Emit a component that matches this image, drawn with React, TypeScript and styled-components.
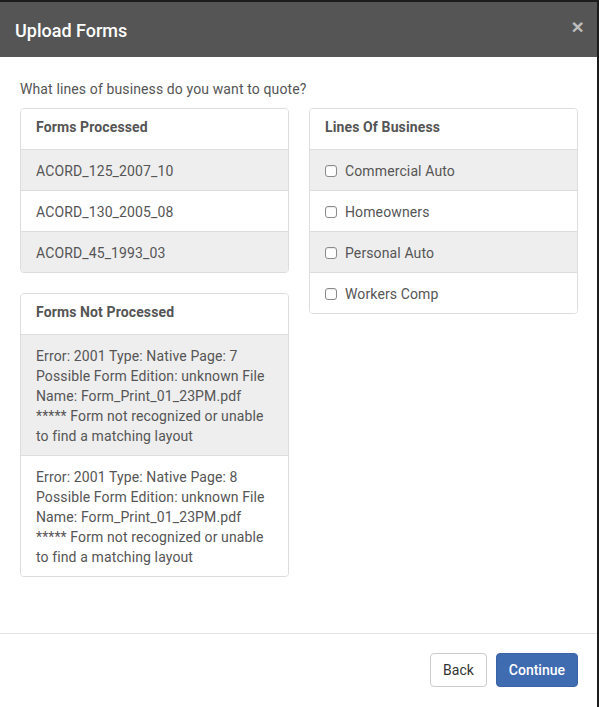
import React from "react";
import styled, { createGlobalStyle } from "styled-components";

const Global = createGlobalStyle`
  html, body { margin: 0; padding: 0; background: #1c1c1c; }
  * { box-sizing: border-box; }
  body { font-family: Roboto, "Helvetica Neue", Arial, sans-serif; font-size: 14px; line-height: 20px; color: #555; letter-spacing: 0.12px; }
`;

const Page = styled.div`
  width: 599px;
  height: 707px;
  padding-top: 2px;
  overflow: hidden;
`;

const Modal = styled.div`
  width: 597px;
  background: #fff;
  height: 705px;
  display: flex;
  flex-direction: column;
`;

const Header = styled.div`
  height: 55px;
  background: #555;
  display: flex;
  align-items: center;
  justify-content: space-between;
  padding: 0 15px;
`;

const Title = styled.h4`
  margin: 0;
  color: #fff;
  font-size: 18px;
  font-weight: 500;
  line-height: 20px;
  padding-top: 3px;
  letter-spacing: 0;
`;

const Close = styled.span`
  color: #bdbdbd;
  font-size: 21px;
  font-weight: 700;
  line-height: 1;
  margin-top: -6px;
  margin-right: -2px;
  font-family: "Liberation Sans", Arial, sans-serif;
`;

const Body = styled.div`
  padding: 22px 20px 0 20px;
  height: 576px;
`;

const Question = styled.p`
  margin: 0 0 9px;
  color: #555;
`;

const Columns = styled.div`
  display: grid;
  grid-template-columns: 269px 269px;
  column-gap: 20px;
  align-items: start;
`;

const Col = styled.div`
  display: flex;
  flex-direction: column;
  gap: 20px;
`;

const Panel = styled.div`
  border: 1px solid #ddd;
  border-radius: 4px;
  overflow: hidden;
`;

const PanelHeading = styled.div`
  padding: 8px 15px 12px;
  font-weight: 700;
  color: #555;
  background: #fff;
`;

const Item = styled.div<{ $shade: boolean }>`
  padding: 11px 15px 9px;
  border-top: 1px solid #ddd;
  background: ${(p) => (p.$shade ? "#eee" : "#fff")};
  color: #555;
  display: flex;
  align-items: center;
`;

const Check = styled.span`
  width: 12px;
  height: 12px;
  border: 1px solid #8a8a8a;
  border-radius: 3px;
  background: #fff;
  margin: 0 8px 0 0;
  flex: none;
  box-shadow: inset 0 1px 1px rgba(0,0,0,0.08);
`;

const Footer = styled.div`
  border-top: 1px solid #e5e5e5;
  padding: 19px 19px 0;
  display: flex;
  justify-content: flex-end;
  gap: 9px;
`;

const Button = styled.button<{ $primary?: boolean }>`
  font-family: Roboto, "Helvetica Neue", Arial, sans-serif;
  font-size: 14px;
  line-height: 20px;
  padding: 6px 12px;
  height: 34px;
  border-radius: 4px;
  border: 1px solid ${(p) => (p.$primary ? "#3a63a5" : "#ccc")};
  background: ${(p) => (p.$primary ? "#3f6bb0" : "#fff")};
  color: ${(p) => (p.$primary ? "#fff" : "#333")};
  font-weight: ${(p) => (p.$primary ? 500 : 400)};
`;

const processed = ["ACORD_125_2007_10", "ACORD_130_2005_08", "ACORD_45_1993_03"];
const lines = ["Commercial Auto", "Homeowners", "Personal Auto", "Workers Comp"];
const errors = [
  "Error: 2001 Type: Native Page: 7 Possible Form Edition: unknown File Name: Form_Print_01_23PM.pdf ***** Form not recognized or unable to find a matching layout",
  "Error: 2001 Type: Native Page: 8 Possible Form Edition: unknown File Name: Form_Print_01_23PM.pdf ***** Form not recognized or unable to find a matching layout",
];

export default function App() {
  return (
    <Page>
      <Global />
      <Modal>
        <Header>
          <Title>Upload Forms</Title>
          <Close>×</Close>
        </Header>
        <Body>
          <Question>What lines of business do you want to quote?</Question>
          <Columns>
            <Col>
              <Panel>
                <PanelHeading>Forms Processed</PanelHeading>
                {processed.map((f, i) => (
                  <Item key={f} $shade={i % 2 === 0}>{f}</Item>
                ))}
              </Panel>
              <Panel>
                <PanelHeading>Forms Not Processed</PanelHeading>
                {errors.map((e, i) => (
                  <Item key={i} $shade={i % 2 === 0}>{e}</Item>
                ))}
              </Panel>
            </Col>
            <Col>
              <Panel>
                <PanelHeading>Lines Of Business</PanelHeading>
                {lines.map((l, i) => (
                  <Item key={l} $shade={i % 2 === 0}>
                    <Check />
                    {l}
                  </Item>
                ))}
              </Panel>
            </Col>
          </Columns>
        </Body>
        <Footer>
          <Button>Back</Button>
          <Button $primary>Continue</Button>
        </Footer>
      </Modal>
    </Page>
  );
}
